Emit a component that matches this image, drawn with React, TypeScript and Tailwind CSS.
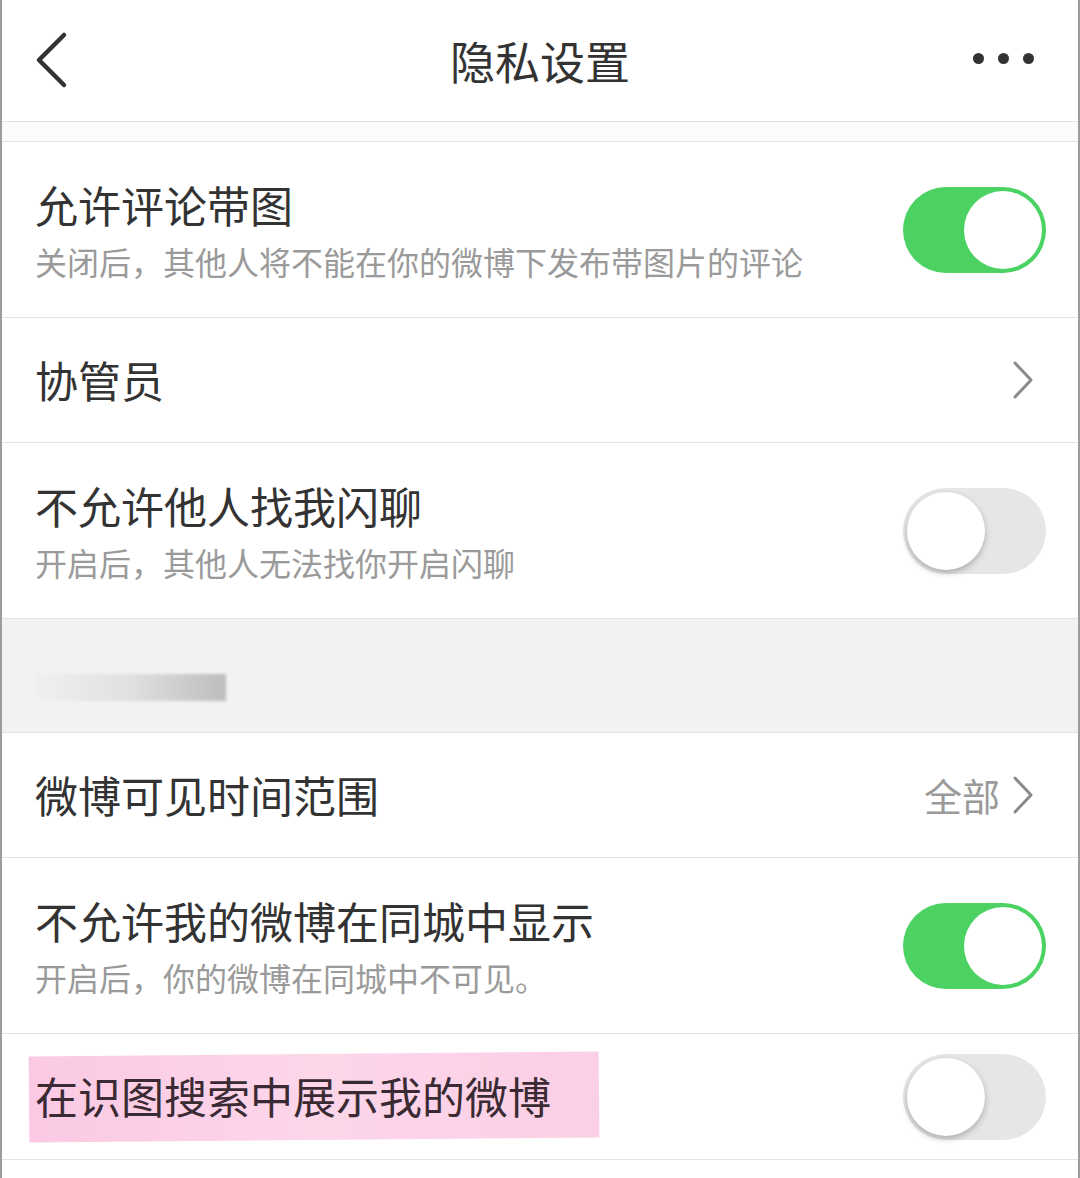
import React from 'react';

type ToggleProps = { on: boolean };

function Toggle({ on }: ToggleProps) {
  return (
    <div
      className={
        'flex h-[86px] w-[143px] shrink-0 items-center rounded-full p-[4px] ' +
        (on ? 'justify-end bg-[#4cd263]' : 'justify-start bg-[#e6e6e6]')
      }
    >
      <div
        className={
          'h-[78px] w-[78px] rounded-full bg-white ' +
          (on ? '' : 'shadow-[0_3px_6px_rgba(0,0,0,0.25)]')
        }
      />
    </div>
  );
}

function Chevron() {
  return (
    <svg width="22" height="38" viewBox="0 0 22 38" className="shrink-0">
      <path d="M3 2 L19 19 L3 36" fill="none" stroke="#8a8a8a" strokeWidth="3" strokeLinecap="round" strokeLinejoin="round" />
    </svg>
  );
}

function SwitchRow({ title, sub, on }: { title: string; sub: string; on: boolean }) {
  return (
    <div className="flex h-[176px] items-center justify-between border-b border-[#e3e3e3] pl-[33px] pr-[32px]">
      <div className="flex flex-col">
        <div className="text-[43px] leading-[50px] text-[#333]">{title}</div>
        <div className="mt-[12px] text-[32px] leading-[40px] text-[#9a9a9a]">{sub}</div>
      </div>
      <Toggle on={on} />
    </div>
  );
}

export default function App() {
  return (
    <div
      className="min-h-[1178px] w-[1080px] border-x-2 border-[#9c9c9c] bg-white"
      style={{ fontFamily: '"Noto Sans CJK SC", "Noto Sans", sans-serif' }}
    >
      {/* header */}
      <div className="relative flex h-[122px] items-center justify-center border-b border-[#e3e3e3]">
        <svg width="40" height="60" viewBox="0 0 40 60" className="absolute left-[30px] top-[31px]">
          <path d="M32 4 L7 29 L32 54" fill="none" stroke="#333" strokeWidth="4.5" strokeLinecap="round" strokeLinejoin="round" />
        </svg>
        <div className="text-[45px] leading-[56px] text-[#333]">隐私设置</div>
        <div className="absolute right-[44px] top-[53px] flex gap-[14px]">
          <div className="h-[11px] w-[11px] rounded-full bg-[#333]" />
          <div className="h-[11px] w-[11px] rounded-full bg-[#333]" />
          <div className="h-[11px] w-[11px] rounded-full bg-[#333]" />
        </div>
      </div>
      <div className="h-[20px] border-b border-[#e3e3e3] bg-[#fbfbfb]" />

      <SwitchRow title="允许评论带图" sub="关闭后，其他人将不能在你的微博下发布带图片的评论" on />

      <div className="flex h-[125px] items-center justify-between border-b border-[#e3e3e3] pl-[33px] pr-[44px]">
        <div className="pb-[3px] text-[43px] leading-[50px] text-[#333]">协管员</div>
        <Chevron />
      </div>

      <SwitchRow title="不允许他人找我闪聊" sub="开启后，其他人无法找你开启闪聊" on={false} />

      {/* section header (blurred) */}
      <div className="flex h-[114px] items-center border-b border-[#e3e3e3] bg-[#f2f2f2] pl-[33px] pt-[24px]">
        <div className="h-[27px] w-[191px] bg-gradient-to-r from-[#f0f0f0] via-[#e0e0e0] to-[#bdbdbd] blur-[1.5px]" />
      </div>

      <div className="flex h-[125px] items-center justify-between border-b border-[#e3e3e3] pl-[33px] pr-[44px]">
        <div className="pb-[3px] text-[43px] leading-[50px] text-[#333]">微博可见时间范围</div>
        <div className="flex items-center gap-[12px]">
          <span className="text-[38px] leading-[48px] text-[#9a9a9a]">全部</span>
          <Chevron />
        </div>
      </div>

      <SwitchRow title="不允许我的微博在同城中显示" sub="开启后，你的微博在同城中不可见。" on />

      <div className="flex h-[126px] items-center justify-between border-b border-[#e3e3e3] pl-[33px] pr-[32px]">
        <div className="relative">
          <div className="absolute left-[-6px] top-[-16px] h-[86px] w-[570px] -rotate-[0.5deg] bg-gradient-to-r from-[#fbc9e3] via-[#fdd6ea] to-[#fbcfe5]" />
          <div className="relative pb-[3px] text-[43px] leading-[50px] text-[#3a2a33]">在识图搜索中展示我的微博</div>
        </div>
        <Toggle on={false} />
      </div>
    </div>
  );
}
